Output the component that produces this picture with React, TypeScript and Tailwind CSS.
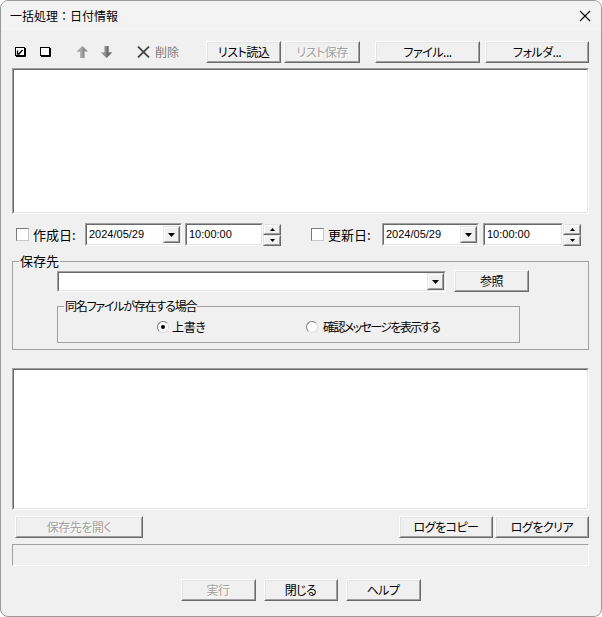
import React from "react";

const JP = "font-['Noto_Sans_CJK_JP',sans-serif] [font-feature-settings:'palt']";
const JPT = "font-['Noto_Sans_CJK_JP',sans-serif]";
const NUM = "font-['Liberation_Sans','Noto_Sans_CJK_JP',sans-serif]";

function Btn({ w, children, disabled }: { w: string; children: React.ReactNode; disabled?: boolean }) {
  return (
    <div className={`${w} h-[22px] shrink-0 border border-t-white border-l-white border-r-[#696969] border-b-[#696969] bg-[#f0f0f0]`}>
      <div
        className={`h-full border border-t-[#e3e3e3] border-l-[#e3e3e3] border-r-[#a0a0a0] border-b-[#a0a0a0] flex items-center justify-center text-[12px] leading-none tracking-[-0.5px] ${JP} ${
          disabled ? "text-[#a0a0a0] [text-shadow:1px_1px_0_#ffffff]" : "text-black"
        }`}
      >
        {children}
      </div>
    </div>
  );
}

function Sunken({ className, children }: { className: string; children?: React.ReactNode }) {
  return (
    <div className={`${className} shrink-0 border border-t-[#a0a0a0] border-l-[#a0a0a0] border-r-white border-b-white`}>
      <div className="h-full w-full border border-t-[#696969] border-l-[#696969] border-r-[#e3e3e3] border-b-[#e3e3e3] bg-white">
        {children}
      </div>
    </div>
  );
}

function SmallRaised({ className, children }: { className: string; children?: React.ReactNode }) {
  return (
    <div className={`${className} border border-t-[#e3e3e3] border-l-[#e3e3e3] border-r-[#696969] border-b-[#696969] bg-[#f0f0f0]`}>
      <div className="h-full w-full border border-t-white border-l-white border-r-[#a0a0a0] border-b-[#a0a0a0] flex items-center justify-center">
        {children}
      </div>
    </div>
  );
}

function DownTri() {
  return (
    <svg width="7" height="4" viewBox="0 0 7 4">
      <polygon points="0,0 7,0 3.5,4" fill="#000" />
    </svg>
  );
}

function Check() {
  return (
    <div className="w-[13px] h-[13px] shrink-0 bg-white border border-t-[#7a7a7a] border-l-[#7a7a7a] border-r-[#c8c8c8] border-b-[#c8c8c8]" />
  );
}

function DateBox({ w }: { w: string }) {
  return (
    <Sunken className={`${w} h-[23px]`}>
      <div className="flex h-full items-center">
        <span className={`flex-1 pl-[2px] text-[11px] text-black ${NUM}`}>2024/05/29</span>
        <SmallRaised className="w-[17px] h-[17px]">
          <DownTri />
        </SmallRaised>
      </div>
    </Sunken>
  );
}

function TimeBox({ w }: { w: string }) {
  return (
    <div className="flex items-center">
      <Sunken className={`${w} h-[23px]`}>
        <div className="flex h-full items-center">
          <span className={`pl-[2px] text-[11px] text-black ${NUM}`}>10:00:00</span>
        </div>
      </Sunken>
      <div className="flex flex-col w-[18px] h-[22px]">
        <SmallRaised className="w-[18px] h-[11px]">
          <svg width="5" height="3" viewBox="0 0 5 3">
            <polygon points="2.5,0 5,3 0,3" fill="#000" />
          </svg>
        </SmallRaised>
        <SmallRaised className="w-[18px] h-[11px]">
          <svg width="5" height="3" viewBox="0 0 5 3">
            <polygon points="0,0 5,0 2.5,3" fill="#000" />
          </svg>
        </SmallRaised>
      </div>
    </div>
  );
}

function Radio({ checked }: { checked?: boolean }) {
  return (
    <div className="w-[12px] h-[12px] shrink-0 rounded-full bg-white border border-t-[#7a7a7a] border-l-[#7a7a7a] border-r-[#dcdcdc] border-b-[#dcdcdc] flex items-center justify-center">
      {checked && <div className="w-[4px] h-[4px] rounded-full bg-black" />}
    </div>
  );
}

export default function App() {
  return (
    <div className="w-[602px] h-[617px] rounded-[8px] border border-[#9a9a9a] bg-[#f0f0f0] overflow-hidden flex flex-col">
      {/* Title bar */}
      <div className="h-[30px] shrink-0 flex items-center justify-between pl-[9px] pr-[10px] bg-[#f3f3f3]">
        <span className={`text-[12px] text-black ${JPT}`}>一括処理：日付情報</span>
        <svg width="12" height="12" viewBox="0 0 12 12">
          <path d="M1 1 L11 11 M11 1 L1 11" stroke="#000" strokeWidth="1.1" />
        </svg>
      </div>

      <div className="flex flex-col pl-[11px] pr-[12px]">
        {/* Toolbar */}
        <div className="mt-[10px] h-[22px] flex items-center">
          <div className="w-[195px] flex items-center h-full">
            <svg className="ml-[3px]" width="11" height="10" viewBox="0 0 11 10">
              <rect x="0.5" y="0.5" width="9" height="8" fill="#fff" stroke="#000" />
              <path d="M10.5 1 V9.5 H1" stroke="#000" fill="none" />
              <path d="M2.5 3.5 V7 H4 L7.5 3" stroke="#000" strokeWidth="1.4" fill="none" />
            </svg>
            <svg className="ml-[14px]" width="11" height="10" viewBox="0 0 11 10">
              <rect x="0.5" y="0.5" width="9" height="8" fill="#fff" stroke="#000" />
              <path d="M10.5 1 V9.5 H1" stroke="#000" fill="none" />
            </svg>
            <svg className="ml-[26px]" width="11" height="12" viewBox="0 0 11 12">
              <polygon points="5.5,0 11,5.5 7.5,5.5 7.5,12 3.5,12 3.5,5.5 0,5.5" fill="#8c8c8c" />
              <polygon points="5.5,0 5.5,12 3.5,12 3.5,5.5 0,5.5" fill="#a8a8a8" />
            </svg>
            <svg className="ml-[13px]" width="11" height="12" viewBox="0 0 11 12">
              <polygon points="3.5,0 7.5,0 7.5,6.5 11,6.5 5.5,12 0,6.5 3.5,6.5" fill="#8c8c8c" />
              <polygon points="5.5,0 7.5,0 7.5,6.5 11,6.5 5.5,12" fill="#6e6e6e" />
            </svg>
            <svg className="ml-[25px]" width="13" height="12" viewBox="0 0 13 12">
              <path d="M1 0.5 L12 11.5 M12 0.5 L1 11.5" stroke="#4a4a4a" strokeWidth="1.8" />
            </svg>
            <span className={`ml-[5px] text-[12px] text-[#7a7a7a] ${JP}`}>削除</span>
          </div>
          <Btn w="w-[75px]">リスト読込</Btn>
          <div className="w-[3px]" />
          <Btn w="w-[76px]" disabled>
            リスト保存
          </Btn>
          <div className="w-[15px]" />
          <Btn w="w-[105px]">ファイル...</Btn>
          <div className="w-[5px]" />
          <Btn w="w-[104px]">フォルダ...</Btn>
        </div>

        {/* List */}
        <Sunken className="mt-[5px] w-full h-[146px]" />

        {/* Date row */}
        <div className="mt-[9px] h-[23px] flex items-center">
          <div className="w-[73px] flex items-center">
            <div className="ml-[4px]">
              <Check />
            </div>
            <span className={`ml-[4px] text-[13px] text-black ${JP}`}>作成日:</span>
          </div>
          <DateBox w="w-[97px]" />
          <div className="w-[3px]" />
          <TimeBox w="w-[78px]" />
          <div className="w-[26px]" />
          <div className="w-[75px] flex items-center">
            <div className="ml-[4px]">
              <Check />
            </div>
            <span className={`ml-[4px] text-[13px] text-black ${JP}`}>更新日:</span>
          </div>
          <DateBox w="w-[97px]" />
          <div className="w-[4px]" />
          <TimeBox w="w-[80px]" />
        </div>

        {/* 保存先 group */}
        <fieldset className="mt-[7px] w-[577px] border border-[#a0a0a0] pb-[6px]">
          <legend className={`ml-[6px] px-[1px] text-[13px] leading-[16px] text-black ${JP}`}>保存先</legend>
          <div className="mt-[1px] h-[22px] flex items-end">
            <div className="w-[44px]" />
            <Sunken className="w-[389px] h-[21px]">
              <div className="flex h-full items-center justify-end">
                <SmallRaised className="w-[17px] h-[17px]">
                  <DownTri />
                </SmallRaised>
              </div>
            </Sunken>
            <div className="w-[8px]" />
            <div className="self-start">
              <Btn w="w-[75px]">参照</Btn>
            </div>
          </div>
          <fieldset className="mt-[6px] ml-[44px] w-[463px] h-[45px] border border-[#a0a0a0]">
            <legend className={`ml-[6px] px-[1px] text-[12px] leading-[16px] tracking-[-1.2px] text-black ${JP}`}>
              同名ファイルが存在する場合
            </legend>
            <div className="mt-[5px] h-[16px] flex items-center">
              <div className="w-[99px]" />
              <div className="w-[149px] flex items-center">
                <Radio checked />
                <span className={`ml-[3px] text-[12px] tracking-[-0.3px] text-black ${JP}`}>上書き</span>
              </div>
              <div className="flex items-center">
                <Radio />
                <span className={`ml-[5px] text-[12px] tracking-[-1.6px] text-black ${JP}`}>確認メッセージを表示する</span>
              </div>
            </div>
          </fieldset>
        </fieldset>

        {/* Log */}
        <Sunken className="mt-[18px] w-full h-[142px]" />

        {/* Log buttons */}
        <div className="mt-[6px] h-[22px] flex items-center">
          <div className="w-[3px]" />
          <Btn w="w-[128px]" disabled>
            保存先を開く
          </Btn>
          <div className="flex-1" />
          <Btn w="w-[94px]">ログをコピー</Btn>
          <div className="w-[2px]" />
          <Btn w="w-[94px]">ログをクリア</Btn>
        </div>

        {/* Status bar */}
        <div className="mt-[6px] w-full h-[22px] border border-t-[#a0a0a0] border-l-[#a0a0a0] border-r-white border-b-white bg-[#f0f0f0]" />

        {/* Bottom buttons */}
        <div className="mt-[13px] h-[22px] flex items-center justify-center gap-[8px]">
          <Btn w="w-[75px]" disabled>
            実行
          </Btn>
          <Btn w="w-[74px]">閉じる</Btn>
          <Btn w="w-[75px]">ヘルプ</Btn>
        </div>
      </div>
    </div>
  );
}
